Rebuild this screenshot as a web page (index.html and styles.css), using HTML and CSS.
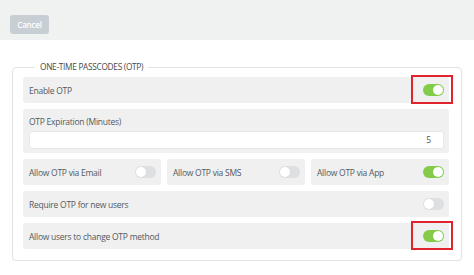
FILE: index.html
```html
<!DOCTYPE html>
<html>
<head>
<meta charset="utf-8">
<link rel="stylesheet" href="styles.css">
</head>
<body>
<div class="topbar">
  <button class="btn-cancel">Cancel</button>
</div>
<fieldset class="group">
  <legend class="group-title">ONE-TIME PASSCODES (OTP)</legend>
  <div class="row">
    <span class="label">Enable OTP</span>
    <span class="toggle-wrap"><span class="toggle on"></span><span class="highlight"></span></span>
  </div>
  <div class="row field">
    <span class="label">OTP Expiration (Minutes)</span>
    <div class="input">5</div>
  </div>
  <div class="row-grid">
    <div class="row">
      <span class="label">Allow OTP via Email</span>
      <span class="toggle"></span>
    </div>
    <div class="row">
      <span class="label">Allow OTP via SMS</span>
      <span class="toggle"></span>
    </div>
    <div class="row">
      <span class="label">Allow OTP via App</span>
      <span class="toggle on"></span>
    </div>
  </div>
  <div class="row">
    <span class="label">Require OTP for new users</span>
    <span class="toggle"></span>
  </div>
  <div class="row">
    <span class="label">Allow users to change OTP method</span>
    <span class="toggle-wrap"><span class="toggle on"></span><span class="highlight"></span></span>
  </div>
</fieldset>
</body>
</html>
```
FILE: styles.css
```css
html, body {
  margin: 0;
  padding: 0;
  background: #ffffff;
  font-family: "Open Sans", "Noto Sans", sans-serif;
  color: #555a5e;
}
.topbar {
  height: 40px;
  background: #f0f1f1;
  padding: 11px 0 0 10px;
  box-sizing: border-box;
}
.btn-cancel {
  width: 39px;
  height: 19px;
  border: none;
  border-radius: 3px;
  background: #c7ced4;
  color: #ffffff;
  font-family: "Open Sans", sans-serif;
  font-weight: 600;
  font-size: 8px;
  letter-spacing: -0.2px;
  padding: 0;
}
.group {
  margin: 21px 0 0 12px;
  width: 450px;
  box-sizing: border-box;
  border: 1px solid #e3e3e3;
  border-radius: 4px;
  padding: 4px 12px 11px 10px;
  display: flex;
  flex-direction: column;
  gap: 6px;
  box-shadow: 0 1px 1px rgba(0,0,0,0.04);
}
.group-title {
  font-size: 8.3px;
  line-height: 12px;
  letter-spacing: -0.3px;
  padding: 0 5px;
  margin-left: 12px;
  color: #45494d;
}
.row {
  height: 26px;
  background: #f0f0f0;
  border-radius: 3px;
  display: flex;
  align-items: center;
  justify-content: space-between;
  padding: 0 5px 0 6px;
  box-sizing: border-box;
}
.label {
  font-size: 8.5px;
  letter-spacing: -0.25px;
  color: #54595d;
}
.row.field {
  height: 44px;
  flex-direction: column;
  align-items: stretch;
  justify-content: flex-start;
  padding: 7px 5px 5px 6px;
  gap: 4px;
}
.input {
  height: 18px;
  background: #ffffff;
  border: 1px solid #e8e8e8;
  border-radius: 3px;
  box-sizing: border-box;
  font-size: 8.5px;
  text-align: right;
  padding-right: 12px;
  line-height: 16px;
  color: #555;
}
.row-grid {
  display: grid;
  grid-template-columns: 1fr 1fr 1fr;
  gap: 6px;
}
.toggle-wrap {
  position: relative;
  display: flex;
}
.toggle {
  width: 21px;
  height: 12px;
  border-radius: 6px;
  background: #dedfe0;
  position: relative;
  display: block;
}
.toggle::after {
  content: "";
  position: absolute;
  left: 1px;
  top: 1px;
  width: 10px;
  height: 10px;
  border-radius: 50%;
  background: #ffffff;
}
.toggle.on {
  background: #82cc4a;
}
.toggle.on::after {
  left: 10px;
}
.highlight {
  position: absolute;
  left: -12px;
  top: -9px;
  width: 42px;
  height: 29px;
  box-sizing: border-box;
  border: 2px solid #e0232d;
}
```
